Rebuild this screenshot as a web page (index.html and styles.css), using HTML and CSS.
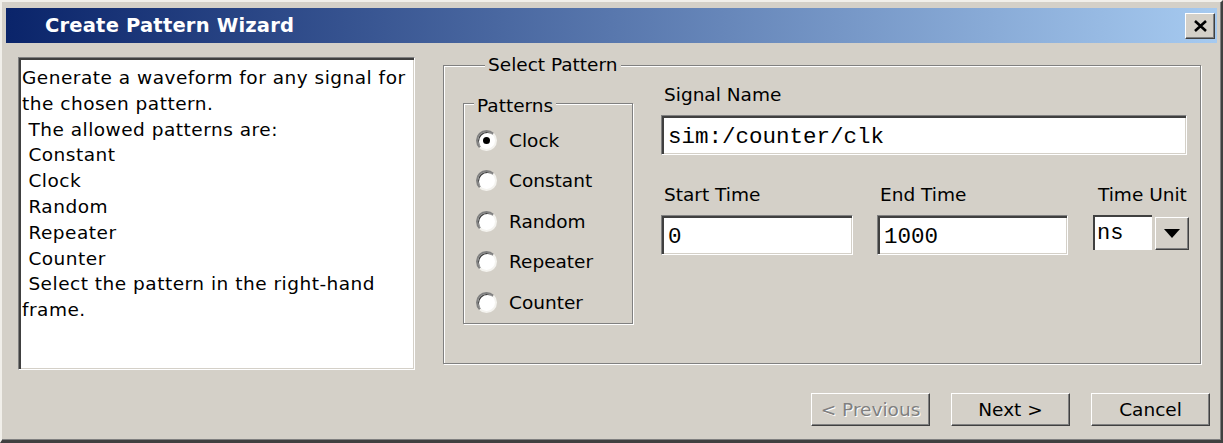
FILE: index.html
```html
<!DOCTYPE html>
<html>
<head>
<meta charset="utf-8">
<title>Create Pattern Wizard</title>
<link rel="stylesheet" href="styles.css">
</head>
<body>
<div class="window">
  <div class="titlebar">
    <span class="title">Create Pattern Wizard</span>
    <button class="close" aria-label="Close">
      <svg width="15" height="12" viewBox="0 0 15 12"><path d="M2 1 L13 11 M13 1 L2 11" stroke="#000" stroke-width="2.6" fill="none"/></svg>
    </button>
  </div>
  <div class="content">
    <div class="desc sunken">
      <div class="line">Generate a waveform for any signal for</div>
      <div class="line">the chosen pattern.</div>
      <div class="line"> The allowed patterns are:</div>
      <div class="line"> Constant</div>
      <div class="line"> Clock</div>
      <div class="line"> Random</div>
      <div class="line"> Repeater</div>
      <div class="line"> Counter</div>
      <div class="line"> Select the pattern in the right-hand</div>
      <div class="line">frame.</div>
    </div>
    <div class="group select-group">
      <span class="group-label select-label">Select Pattern</span>
      <div class="group patterns">
        <span class="group-label patterns-label">Patterns</span>
        <label class="radio-row"><span class="radio checked"></span>Clock</label>
        <label class="radio-row"><span class="radio"></span>Constant</label>
        <label class="radio-row"><span class="radio"></span>Random</label>
        <label class="radio-row"><span class="radio"></span>Repeater</label>
        <label class="radio-row"><span class="radio"></span>Counter</label>
      </div>
      <div class="fields">
        <div class="field">
          <span class="field-label">Signal Name</span>
          <div class="input sunken signal">sim:/counter/clk</div>
        </div>
        <div class="field-row">
          <div class="field">
            <span class="field-label">Start Time</span>
            <div class="input sunken start">0</div>
          </div>
          <div class="field">
            <span class="field-label">End Time</span>
            <div class="input sunken end">1000</div>
          </div>
          <div class="field unit">
            <span class="field-label unit-label">Time Unit</span>
            <div class="combo">
              <div class="combo-field">ns</div>
              <div class="combo-btn raised">
                <svg width="16" height="9" viewBox="0 0 16 9"><path d="M0 0 H16 L8 9 Z" fill="#000"/></svg>
              </div>
            </div>
          </div>
        </div>
      </div>
    </div>
  </div>
  <div class="buttons">
    <button class="btn raised disabled">&lt; Previous</button>
    <button class="btn raised">Next &gt;</button>
    <button class="btn raised">Cancel</button>
  </div>
</div>
</body>
</html>
```

FILE: styles.css
```css
html, body {
  margin: 0;
  padding: 0;
  background: #d4d0c8;
}

.window {
  box-sizing: border-box;
  width: 1223px;
  height: 443px;
  background: #d4d0c8;
  border-style: solid;
  border-width: 2px 2px 3px 2px;
  border-color: #f1efea #404040 #404040 #f1efea;
  box-shadow: inset -1px -1px 0 #808080;
  padding: 6px 4px 0 4px;
  font-family: "DejaVu Sans", sans-serif;
  font-size: 18.5px;
  color: #000;
}

.titlebar {
  height: 35px;
  display: flex;
  align-items: center;
  justify-content: space-between;
  padding: 0 2px 0 39px;
  background: linear-gradient(to right, #0a246a, #a6caf0);
}

.title {
  color: #fff;
  font-weight: bold;
  font-size: 19.5px;
  letter-spacing: 0.2px;
}

.close {
  box-sizing: border-box;
  width: 30px;
  height: 26px;
  padding: 0;
  display: flex;
  align-items: center;
  justify-content: center;
  background: #d4d0c8;
  border: 1px solid;
  border-color: #fff #404040 #404040 #fff;
  box-shadow: inset -1px -1px 0 #808080;
}

.content {
  display: flex;
  align-items: flex-start;
  padding: 14px 0 0 12px;
}

.sunken {
  box-sizing: border-box;
  background: #fff;
  border: 1px solid;
  border-color: #808080 #fff #fff #808080;
  box-shadow: inset 2px 2px 0 #404040, inset -1px -1px 0 #d4d0c8;
}

.raised {
  box-sizing: border-box;
  background: #d4d0c8;
  border: 1px solid;
  border-color: #fff #404040 #404040 #fff;
  box-shadow: inset -1px -1px 0 #808080;
}

.desc {
  width: 397px;
  height: 313px;
  padding: 7px 3px 0 3px;
  letter-spacing: 0.5px;
}

.line {
  white-space: pre;
  line-height: 25.8px;
}

.group {
  position: relative;
  box-sizing: border-box;
  border: 1px solid #808080;
  box-shadow: 1px 1px 0 #fff, inset 1px 1px 0 #fff;
}

.group-label {
  position: absolute;
  line-height: 20px;
  padding: 0 3px;
  background: #d4d0c8;
}

.select-group {
  margin: 8px 0 0 28px;
  width: 758px;
  height: 299px;
  display: flex;
  align-items: flex-start;
  padding: 19px 0 0 19px;
}

.select-label {
  top: -11px;
  left: 41px;
}

.patterns {
  margin-top: 18px;
  width: 170px;
  height: 221px;
  padding: 16px 0 0 12px;
  display: flex;
  flex-direction: column;
}

.patterns-label {
  top: -8px;
  left: 10px;
}

.radio-row {
  height: 40.5px;
  display: flex;
  align-items: center;
  gap: 12px;
}

.radio {
  box-sizing: border-box;
  position: relative;
  width: 21px;
  height: 21px;
  border-radius: 50%;
  background: #fff;
  border: 2px solid;
  border-color: #808080 #f4f3ef #f4f3ef #808080;
  box-shadow: inset 1px 1px 0 #404040;
}

.radio.checked::after {
  content: "";
  position: absolute;
  left: 5px;
  top: 5px;
  width: 7px;
  height: 7px;
  border-radius: 50%;
  background: #000;
}

.fields {
  margin-left: 28px;
  width: 528px;
  display: flex;
  flex-direction: column;
  gap: 30px;
}

.field {
  display: flex;
  flex-direction: column;
  gap: 10px;
}

.field-label {
  line-height: 20px;
  padding-left: 3px;
}

.input {
  height: 40px;
  padding: 3px 0 0 6px;
  font-family: "Liberation Mono", monospace;
  font-size: 22.5px;
  line-height: 36px;
}

.signal {
  width: 526px;
}

.field-row {
  display: flex;
  gap: 24px;
}

.start {
  width: 192px;
}

.end {
  width: 191px;
}

.unit {
  margin-left: 1px;
}

.unit-label {
  padding-left: 5px;
}

.combo {
  display: flex;
  align-items: flex-start;
  gap: 3px;
}

.combo-field {
  box-sizing: border-box;
  width: 59px;
  height: 35px;
  background: #fff;
  border-top: 2px solid #404040;
  border-left: 2px solid #404040;
  padding: 2px 0 0 2px;
  font-family: "Liberation Mono", monospace;
  font-size: 22px;
  line-height: 30px;
}

.combo-btn {
  margin-top: 2px;
  width: 34px;
  height: 33px;
  display: flex;
  align-items: center;
  justify-content: center;
}

.buttons {
  display: flex;
  justify-content: flex-end;
  gap: 21px;
  margin-top: 23px;
  padding-right: 7px;
}

.btn {
  width: 119px;
  height: 33px;
  padding: 0;
  font-family: "DejaVu Sans", sans-serif;
  font-size: 18.5px;
  color: #000;
}

.btn.disabled {
  color: #808080;
  text-shadow: 1px 1px 0 #fff;
}
```
